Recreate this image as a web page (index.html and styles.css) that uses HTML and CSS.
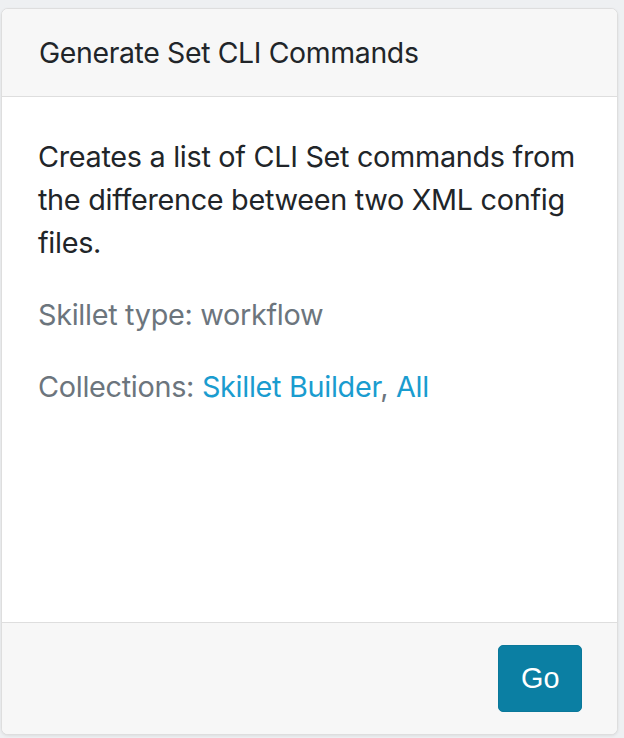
FILE: index.html
```html
<!DOCTYPE html>
<html>
<head>
<meta charset="utf-8">
<link rel="stylesheet" href="styles.css">
</head>
<body>
<div class="card">
  <div class="card-header">Generate Set CLI Commands</div>
  <div class="card-body">
    <p class="text">Creates a list of CLI Set commands from the difference between two XML config files.</p>
    <p class="muted">Skillet type: workflow</p>
    <p class="muted">Collections: <a href="#" class="link">Skillet Builder</a>, <a href="#" class="link">All</a></p>
  </div>
  <div class="card-footer">
    <button class="btn">Go</button>
  </div>
</div>
</body>
</html>
```
FILE: styles.css
```css
html, body {
  margin: 0;
  height: 100%;
}
body {
  background: #eef0f2;
  padding: 8px 6px 4px 1px;
  box-sizing: border-box;
  font-family: Inter, "Noto Sans", sans-serif;
  color: #212529;
  font-size: 28.8px;
  line-height: 43px;
}
.card {
  height: 725px;
  display: flex;
  flex-direction: column;
  background: #fff;
  border: 1px solid #dedede;
  border-radius: 7px;
  box-shadow: 0 1px 3px rgba(0,0,0,0.08);
  overflow: hidden;
}
.card-header {
  background: #f7f7f7;
  border-bottom: 1px solid #dedede;
  padding: 22px 36px 22px 37px;
  font-size: 28.4px;
  line-height: 43px;
  letter-spacing: -0.35px;
}
.card-body {
  flex: 1;
  padding: 38px 36px 0 36px;
}
.card-body p {
  margin: 0 0 29px 0;
  letter-spacing: -0.3px;
}
.muted {
  color: #6c757d;
}
.link {
  color: #1a9ccf;
  text-decoration: none;
}
.card-footer {
  background: #f7f7f7;
  border-top: 1px solid #dedede;
  padding: 22px 35px 22px 36px;
  display: flex;
  justify-content: flex-end;
  align-items: flex-start;
}
.btn {
  font-family: "Liberation Sans", Arial, sans-serif;
  font-size: 28.8px;
  line-height: 43px;
  padding: 11px 21.6px;
  color: #fff;
  background: #0b7fa3;
  border: 1px solid #0a789a;
  border-radius: 5px;
}
```
